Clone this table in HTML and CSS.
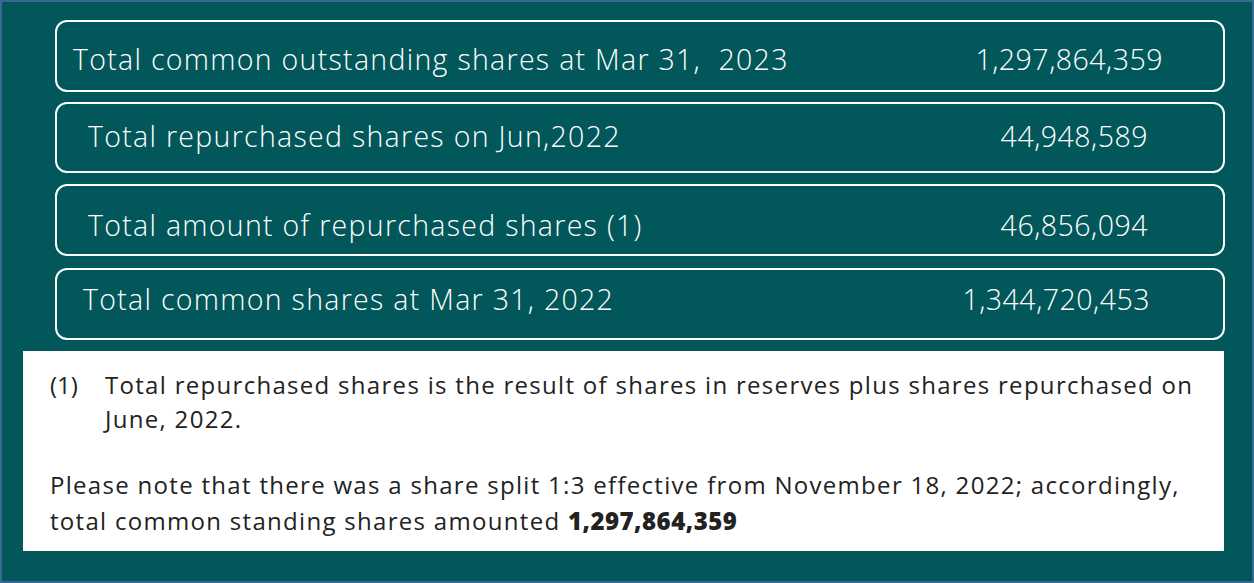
FILE: index.html
```html
<!DOCTYPE html>
<html lang="en">
<head>
<meta charset="utf-8">
<link rel="stylesheet" href="styles.css">
</head>
<body>
<div class="frame">
  <div class="rows">
    <div class="row r1"><span class="label">Total common outstanding shares at Mar 31,&nbsp; 2023</span><span class="value">1,297,864,359</span></div>
    <div class="row r2"><span class="label">Total repurchased shares on Jun,2022</span><span class="value">44,948,589</span></div>
    <div class="row r3"><span class="label">Total amount of repurchased shares (1)</span><span class="value">46,856,094</span></div>
    <div class="row r4"><span class="label">Total common shares at Mar 31, 2022</span><span class="value">1,344,720,453</span></div>
  </div>
  <div class="notes">
    <div class="footnote"><span class="num">(1)</span><span class="ftext">Total repurchased shares is the result of shares in reserves plus shares repurchased on June, 2022.</span></div>
    <p class="para">Please note that there was a share split 1:3 effective from November 18, 2022; accordingly, total common standing shares amounted <b>1,297,864,359</b></p>
  </div>
</div>
</body>
</html>
```

FILE: styles.css
```css
* { box-sizing: border-box; }
html, body { margin: 0; padding: 0; }
body { width: 1254px; height: 583px; overflow: hidden; font-family: "Open Sans", "Noto Sans", sans-serif; }
.frame {
  width: 1254px; height: 583px;
  background: #02575a;
  border: 2px solid #3a6896;
  padding: 18px 27px 0 21px;
}
.rows { display: flex; flex-direction: column; padding-left: 32px; }
.row {
  height: 72px;
  border: 2px solid #ffffff;
  border-radius: 12px;
  display: flex; align-items: center; justify-content: space-between;
  color: #ffffff;
  font-size: 28.5px;
  font-weight: 300;
}
.label { letter-spacing: 1.3px; }
.value { letter-spacing: 0.5px; }
.r1 { padding: 6px 60px 0 16px; }
.r2 { padding: 0 75px 4px 31px; height: 71px; margin-top: 10px; }
.r3 { padding: 10px 75px 0 31px; margin-top: 11px; }
.r4 { padding: 0 73px 10px 26px; margin-top: 12px; }
.notes {
  margin-top: 11px;
  width: 1201px; height: 200px;
  background: #ffffff;
  color: #222222;
  font-size: 24px;
  letter-spacing: 1.3px;
  line-height: 34px;
  padding: 17px 14px 0 27px;
}
.footnote { display: flex; }
.num { width: 55px; flex: none; letter-spacing: 0; }
.para { margin: 31px 0 0; line-height: 36px; }
.para b { font-weight: 800; letter-spacing: 0.5px; }
```
